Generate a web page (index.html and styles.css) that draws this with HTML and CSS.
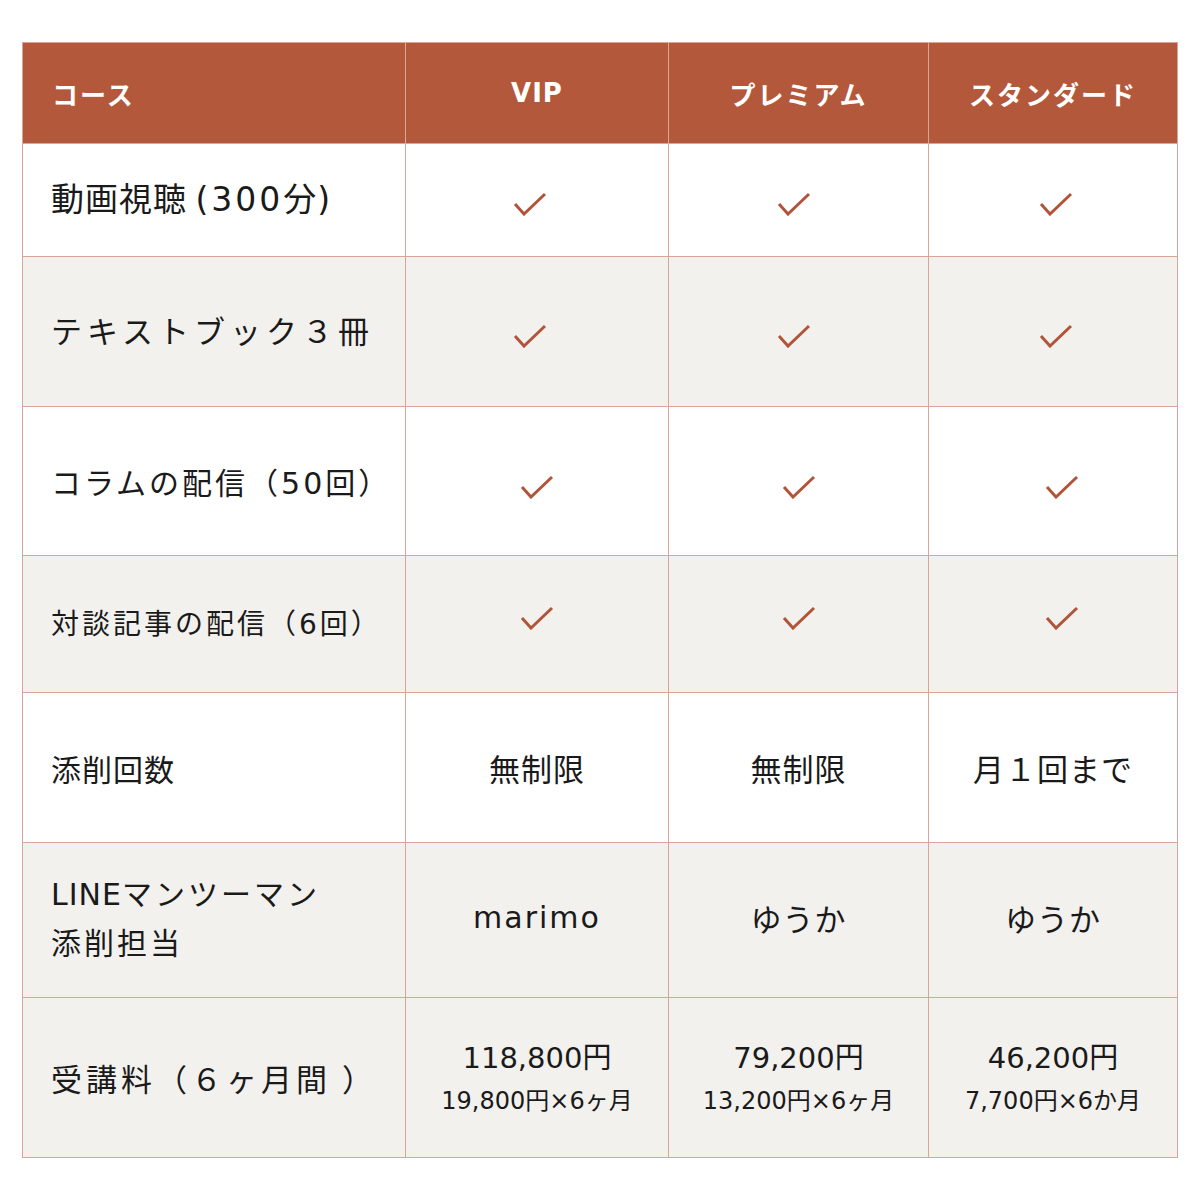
FILE: index.html
```html
<!DOCTYPE html>
<html lang="ja">
<head>
<meta charset="utf-8">
<title>コース比較</title>
<link rel="stylesheet" href="styles.css">
</head>
<body>
<table class="plans">
  <colgroup>
    <col class="c-label">
    <col class="c-vip">
    <col class="c-pre">
    <col class="c-std">
  </colgroup>
  <thead>
    <tr class="r-head">
      <th class="label">コース</th>
      <th class="lat">VIP</th>
      <th>プレミアム</th>
      <th>スタンダード</th>
    </tr>
  </thead>
  <tbody>
    <tr class="r1">
      <td class="label l1">動画視聴 <span class="lat">(300</span>分<span class="lat">)</span></td>
      <td class="chk a"><svg viewBox="0 0 34 24" width="34" height="24"><path d="M2 12 L11 22 L32 2"/></svg></td>
      <td class="chk b"><svg viewBox="0 0 34 24" width="34" height="24"><path d="M2 12 L11 22 L32 2"/></svg></td>
      <td class="chk c"><svg viewBox="0 0 34 24" width="34" height="24"><path d="M2 12 L11 22 L32 2"/></svg></td>
    </tr>
    <tr class="r2 alt">
      <td class="label l2">テキストブック３冊</td>
      <td class="chk a"><svg viewBox="0 0 34 24" width="34" height="24"><path d="M2 12 L11 22 L32 2"/></svg></td>
      <td class="chk b"><svg viewBox="0 0 34 24" width="34" height="24"><path d="M2 12 L11 22 L32 2"/></svg></td>
      <td class="chk c"><svg viewBox="0 0 34 24" width="34" height="24"><path d="M2 12 L11 22 L32 2"/></svg></td>
    </tr>
    <tr class="r3">
      <td class="label l3">コラムの配信（<span class="lat">50</span>回）</td>
      <td class="chk d"><svg viewBox="0 0 34 24" width="34" height="24"><path d="M2 12 L11 22 L32 2"/></svg></td>
      <td class="chk e"><svg viewBox="0 0 34 24" width="34" height="24"><path d="M2 12 L11 22 L32 2"/></svg></td>
      <td class="chk f"><svg viewBox="0 0 34 24" width="34" height="24"><path d="M2 12 L11 22 L32 2"/></svg></td>
    </tr>
    <tr class="r4 alt">
      <td class="label l4">対談記事の配信（<span class="lat">6</span>回）</td>
      <td class="chk d up"><svg viewBox="0 0 34 24" width="34" height="24"><path d="M2 12 L11 22 L32 2"/></svg></td>
      <td class="chk e up"><svg viewBox="0 0 34 24" width="34" height="24"><path d="M2 12 L11 22 L32 2"/></svg></td>
      <td class="chk f up"><svg viewBox="0 0 34 24" width="34" height="24"><path d="M2 12 L11 22 L32 2"/></svg></td>
    </tr>
    <tr class="r5">
      <td class="label">添削回数</td>
      <td class="val">無制限</td>
      <td class="val">無制限</td>
      <td class="val">月１回まで</td>
    </tr>
    <tr class="r6 alt">
      <td class="label l6"><span class="lat">LINE</span>マンツーマン<br>添削担当</td>
      <td class="val lat name">marimo</td>
      <td class="val name">ゆうか</td>
      <td class="val name">ゆうか</td>
    </tr>
    <tr class="r7 alt">
      <td class="label l7">受講料（６ヶ月間 ）</td>
      <td class="val price"><div class="big"><span class="lat">118,800</span>円</div><div class="small"><span class="lat">19,800</span>円<span class="lat">×6</span>ヶ月</div></td>
      <td class="val price"><div class="big"><span class="lat">79,200</span>円</div><div class="small"><span class="lat">13,200</span>円<span class="lat">×6</span>ヶ月</div></td>
      <td class="val price"><div class="big"><span class="lat">46,200</span>円</div><div class="small"><span class="lat">7,700</span>円<span class="lat">×6</span>か月</div></td>
    </tr>
  </tbody>
</table>
</body>
</html>
```

FILE: styles.css
```css
html, body {
  margin: 0;
  padding: 0;
  background: #ffffff;
}

body {
  font-family: "Noto Sans CJK JP", sans-serif;
  color: #1a1a1a;
}

.plans {
  margin: 42px 0 0 22px;
  border-collapse: collapse;
  table-layout: fixed;
  width: 1155px;
}

.c-label { width: 383px; }
.c-vip { width: 263px; }
.c-pre { width: 260px; }
.c-std { width: 249px; }

.plans th,
.plans td {
  border: 1px solid #d8a698;
  padding: 0;
  vertical-align: middle;
  text-align: center;
}

.lat {
  font-family: "DejaVu Sans", "Noto Sans CJK JP", sans-serif;
}

.r-head {
  height: 101px;
  background: #b3583b;
}

.r-head th {
  color: #ffffff;
  font-size: 26px;
  font-weight: 700;
  letter-spacing: 2px;
}

.r-head th.lat {
  font-size: 26px;
  letter-spacing: 1px;
}

.plans .label {
  text-align: left;
  padding-left: 28px;
  font-size: 30px;
  font-weight: 400;
  letter-spacing: 1px;
}

.plans .r-head th.label {
  padding-left: 29px;
  font-size: 26px;
  font-weight: 700;
  letter-spacing: 2px;
}

.alt { background: #f3f1ee; }

.r1 { height: 113px; }
.r2 { height: 150px; }
.r3 { height: 149px; }
.r4 { height: 137px; }
.r5 { height: 150px; }
.r6 { height: 155px; }
.r7 { height: 160px; }

.plans .l1 { font-size: 33px; letter-spacing: 1px; padding-bottom: 6px; }
.plans .l1 .lat { letter-spacing: 3px; font-size: 33px; }
.plans .l2 { font-size: 31px; letter-spacing: 5px; padding-bottom: 4px; }
.plans .l3 { font-size: 30px; letter-spacing: 3px; }
.plans .l4 { font-size: 28px; letter-spacing: 3px; padding-bottom: 4px; }
.plans .l6 { letter-spacing: 3px; line-height: 46px; padding-bottom: 8px; }
.plans .l6 .lat { letter-spacing: 1px; }
.plans .l7 { font-size: 31px; letter-spacing: 4px; }

.chk svg {
  display: block;
  margin: 0 auto;
  fill: none;
  stroke: #b0553a;
  stroke-width: 3;
}

.chk.a { padding-right: 14px; padding-top: 8px; }
.chk.b { padding-right: 10px; padding-top: 8px; }
.chk.c { padding-left: 6px; padding-top: 8px; }
.chk.d { padding-left: 0; padding-top: 12px; }
.chk.e { padding-left: 0; padding-top: 12px; }
.chk.f { padding-left: 18px; padding-top: 12px; }
.chk.up { padding-top: 0; padding-bottom: 12px; }

.val {
  font-size: 31px;
  font-weight: 400;
  letter-spacing: 1px;
}

.val.lat {
  font-size: 30px;
  letter-spacing: 2px;
}

.val.name { padding-bottom: 6px; }

.price { letter-spacing: 0; }

.price .big {
  font-size: 29px;
  line-height: 42px;
}

.price .small {
  font-size: 24px;
  line-height: 40px;
}
```
